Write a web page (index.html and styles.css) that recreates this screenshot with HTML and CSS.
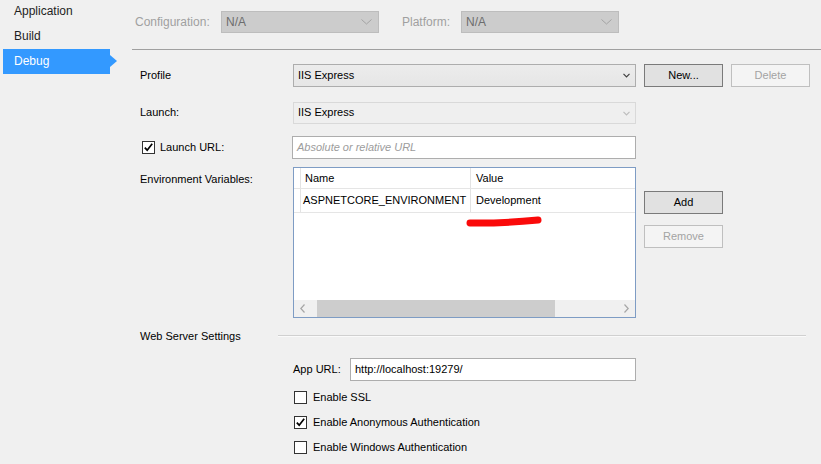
FILE: index.html
```html
<!DOCTYPE html>
<html>
<head>
<meta charset="utf-8">
<link rel="stylesheet" href="styles.css">
</head>
<body>
<div class="app">
  <nav class="sidebar">
    <div class="nav-item first">Application</div>
    <div class="nav-item">Build</div>
    <div class="nav-item active">Debug</div>
  </nav>
  <main class="main">
    <div class="topbar">
      <span class="top-label conf">Configuration:</span>
      <div class="top-select"><span>N/A</span><svg class="top-chev" width="11" height="6" viewBox="0 0 11 6"><polyline points="0.5,0.5 5.5,5 10.5,0.5" fill="none" stroke="#a3a3a3" stroke-width="1"/></svg></div>
      <span class="top-label plat">Platform:</span>
      <div class="top-select"><span>N/A</span><svg class="top-chev" width="11" height="6" viewBox="0 0 11 6"><polyline points="0.5,0.5 5.5,5 10.5,0.5" fill="none" stroke="#a3a3a3" stroke-width="1"/></svg></div>
    </div>
    <div class="form">
      <div class="row r-profile">
        <div class="label">Profile</div>
        <div class="select"><span class="txt">IIS Express</span><svg class="chev" width="7" height="5" viewBox="0 0 7 5"><polyline points="0.5,0.8 3.5,3.8 6.5,0.8" fill="none" stroke="#404040" stroke-width="1.2"/></svg></div>
        <button class="btn strong">New...</button>
        <button class="btn disabled">Delete</button>
      </div>
      <div class="row r-launch">
        <div class="label">Launch:</div>
        <div class="select dis"><span class="txt">IIS Express</span><svg class="chev" width="7" height="5" viewBox="0 0 7 5"><polyline points="0.5,0.8 3.5,3.8 6.5,0.8" fill="none" stroke="#bdbdbd" stroke-width="1.2"/></svg></div>
      </div>
      <div class="row r-url">
        <div class="label check-label">
          <span class="cb"><svg width="11" height="11" viewBox="0 0 11 11"><polyline points="1.8,5.6 4.2,8.2 9.2,1.8" fill="none" stroke="#000" stroke-width="1.7"/></svg></span>
          <span class="cb-text">Launch URL:</span>
        </div>
        <div class="input"><span class="txt placeholder">Absolute or relative URL</span></div>
      </div>
      <div class="row r-env">
        <div class="label env-label">Environment Variables:</div>
        <div class="grid">
          <div class="grid-head">
            <div class="rh"></div>
            <div class="c1">Name</div>
            <div class="c2">Value</div>
          </div>
          <div class="grid-row">
            <div class="rh"></div>
            <div class="c1">ASPNETCORE_ENVIRONMENT</div>
            <div class="c2">Development</div>
          </div>
          <div class="grid-fill"></div>
          <div class="hscroll">
            <div class="arrow"><svg width="5" height="9" viewBox="0 0 5 9"><polyline points="4.5,0.5 0.8,4.5 4.5,8.5" fill="none" stroke="#a6a6a6" stroke-width="1.2"/></svg></div>
            <div class="track"><div class="thumb"></div></div>
            <div class="arrow"><svg width="5" height="9" viewBox="0 0 5 9"><polyline points="0.5,0.5 4.2,4.5 0.5,8.5" fill="none" stroke="#a6a6a6" stroke-width="1.2"/></svg></div>
          </div>
          <svg class="mark" width="90" height="20" viewBox="0 0 90 20"><path d="M8 12 Q 40 12.5 76 9" fill="none" stroke="#fa0a0a" stroke-width="7" stroke-linecap="round"/></svg>
        </div>
        <div class="env-buttons">
          <button class="btn strong">Add</button>
          <button class="btn disabled">Remove</button>
        </div>
      </div>
      <div class="row r-web">
        <div class="web-label">Web Server Settings</div>
        <div class="web-line"></div>
      </div>
      <div class="row r-app">
        <div class="app-label">App URL:</div>
        <div class="input app-input"><span class="txt">http://localhost:19279/</span></div>
      </div>
      <div class="checks">
        <div class="check-row"><span class="cb"></span><span class="cb-text">Enable SSL</span></div>
        <div class="check-row"><span class="cb"><svg width="11" height="11" viewBox="0 0 11 11"><polyline points="1.8,5.6 4.2,8.2 9.2,1.8" fill="none" stroke="#000" stroke-width="1.7"/></svg></span><span class="cb-text">Enable Anonymous Authentication</span></div>
        <div class="check-row"><span class="cb"></span><span class="cb-text">Enable Windows Authentication</span></div>
      </div>
    </div>
  </main>
</div>
</body>
</html>
```

FILE: styles.css
```css
html, body {
  margin: 0;
  padding: 0;
}
body {
  background: #f0f0f0;
  font-family: "Liberation Sans", Arial, sans-serif;
  width: 821px;
  height: 464px;
  overflow: hidden;
  color: #000;
}
.app {
  display: flex;
  height: 464px;
}
.sidebar {
  width: 132px;
  flex: none;
}
.nav-item {
  height: 25px;
  line-height: 25px;
  margin-left: 3px;
  width: 107px;
  padding-left: 11px;
  box-sizing: border-box;
  font-size: 12px;
  color: #1e1e1e;
  position: relative;
}
.nav-item.first {
  margin-top: -1px;
}
.nav-item.active {
  background: #3399ff;
  color: #fff;
}
.nav-item.active::after {
  content: "";
  position: absolute;
  right: -7px;
  top: 6px;
  border-left: 7px solid #3399ff;
  border-top: 6px solid transparent;
  border-bottom: 6px solid transparent;
}
.main {
  flex: 1;
  display: flex;
  flex-direction: column;
}
.topbar {
  box-sizing: border-box;
  height: 50px;
  border-bottom: 1px solid #a0a0a0;
  display: flex;
  align-items: flex-start;
  padding: 11px 0 0 3px;
}
.top-label {
  font-size: 12px;
  color: #a0a0a0;
  line-height: 22px;
  flex: none;
}
.top-label.conf {
  width: 86px;
}
.top-label.plat {
  margin-left: 23px;
  width: 59px;
}
.top-select {
  width: 158px;
  height: 22px;
  box-sizing: border-box;
  background: #cccccc;
  border: 1px solid #bdbdbd;
  display: flex;
  align-items: center;
  justify-content: space-between;
  padding: 0 6px 0 4px;
  font-size: 12px;
  color: #6d6d6d;
}
.form {
  padding-left: 8px;
  display: flex;
  flex-direction: column;
}
.row {
  display: flex;
  align-items: center;
}
.label {
  width: 153px;
  flex: none;
  font-size: 11px;
  padding-bottom: 2px;
}
.txt {
  padding-bottom: 2px;
}
.r-profile {
  margin-top: 14px;
}
.r-launch {
  margin-top: 15px;
}
.r-url {
  margin-top: 12px;
}
.r-env {
  margin-top: 8px;
  align-items: flex-start;
}
.select {
  width: 343px;
  height: 23px;
  box-sizing: border-box;
  border: 1px solid #adadad;
  background: linear-gradient(#ececec, #e6e6e6);
  display: flex;
  align-items: center;
  justify-content: space-between;
  padding: 0 5px 0 4px;
  font-size: 11px;
}
.select.dis {
  height: 22px;
  background: #efefef;
  border-color: #d9d9d9;
}
.btn {
  width: 79px;
  height: 23px;
  margin: 0 0 0 8px;
  padding: 0 0 1px 0;
  box-sizing: border-box;
  font-family: "Liberation Sans", Arial, sans-serif;
  font-size: 11px;
  color: #000;
  background: #e1e1e1;
  border: 1px solid #7a7a7a;
  flex: none;
}
.btn.disabled {
  background: #f4f4f4;
  border-color: #bfbfbf;
  color: #a3a3a3;
}
.check-label {
  display: flex;
  align-items: center;
  padding-bottom: 0;
}
.cb {
  width: 13px;
  height: 13px;
  box-sizing: border-box;
  border: 1px solid #333333;
  background: #fff;
  display: flex;
  align-items: center;
  justify-content: center;
  flex: none;
}
.check-label .cb {
  margin-left: 2px;
}
.cb-text {
  font-size: 11px;
  margin-left: 5px;
  padding-bottom: 2px;
}
.input {
  width: 344px;
  height: 23px;
  box-sizing: border-box;
  border: 1px solid #adadad;
  background: #fff;
  display: flex;
  align-items: center;
  padding-left: 4px;
  font-size: 11px;
  margin-left: -1px;
}
.placeholder {
  font-style: italic;
  color: #9c9c9c;
}
.env-label {
  line-height: 16px;
  padding-top: 4px;
  padding-bottom: 0;
}
.grid {
  width: 343px;
  height: 151px;
  box-sizing: border-box;
  border: 1px solid #7e9cc4;
  background: #fff;
  display: flex;
  flex-direction: column;
  position: relative;
  flex: none;
  font-size: 11px;
}
.grid-head, .grid-row {
  display: flex;
  box-sizing: border-box;
  border-bottom: 1px solid #e5e5e5;
}
.grid-head {
  height: 21px;
}
.grid-row {
  height: 24px;
}
.rh {
  width: 7px;
  box-sizing: border-box;
  border-right: 1px solid #e3e3e3;
  flex: none;
}
.c1 {
  width: 170px;
  box-sizing: border-box;
  border-right: 1px solid #e3e3e3;
  display: flex;
  align-items: center;
  flex: none;
  white-space: nowrap;
  padding-bottom: 1px;
}
.c2 {
  flex: 1;
  display: flex;
  align-items: center;
  padding-left: 5px;
  padding-bottom: 1px;
}
.grid-head .c1 {
  padding-left: 4px;
}
.grid-row .c1 {
  padding-left: 2px;
}
.grid-fill {
  flex: 1;
}
.hscroll {
  height: 17px;
  display: flex;
  background: #f0f0f0;
  flex: none;
}
.arrow {
  width: 17px;
  display: flex;
  align-items: center;
  justify-content: center;
  flex: none;
}
.track {
  flex: 1;
  display: flex;
}
.thumb {
  width: 238px;
  margin-left: 6px;
  background: #cdcdcd;
}
.mark {
  position: absolute;
  left: 168px;
  top: 43px;
}
.env-buttons {
  display: flex;
  flex-direction: column;
  margin-top: 24px;
}
.env-buttons .btn + .btn {
  margin-top: 11px;
}
.r-web {
  margin-top: 10px;
  height: 16px;
}
.web-label {
  width: 138px;
  flex: none;
  font-size: 11px;
  line-height: 16px;
}
.web-line {
  flex: 1;
  margin-right: 15px;
  height: 0;
  border-top: 1px solid #d0d0d0;
  border-bottom: 1px solid #fafafa;
}
.r-app {
  margin-top: 14px;
  margin-left: 153px;
}
.app-label {
  width: 57px;
  flex: none;
  font-size: 11px;
  padding-bottom: 2px;
}
.app-input {
  width: 286px;
  margin-left: 0;
}
.checks {
  margin-top: 4px;
  margin-left: 154px;
  display: flex;
  flex-direction: column;
}
.check-row {
  height: 25px;
  display: flex;
  align-items: center;
}
.check-row .cb-text {
  margin-left: 6px;
}
```
